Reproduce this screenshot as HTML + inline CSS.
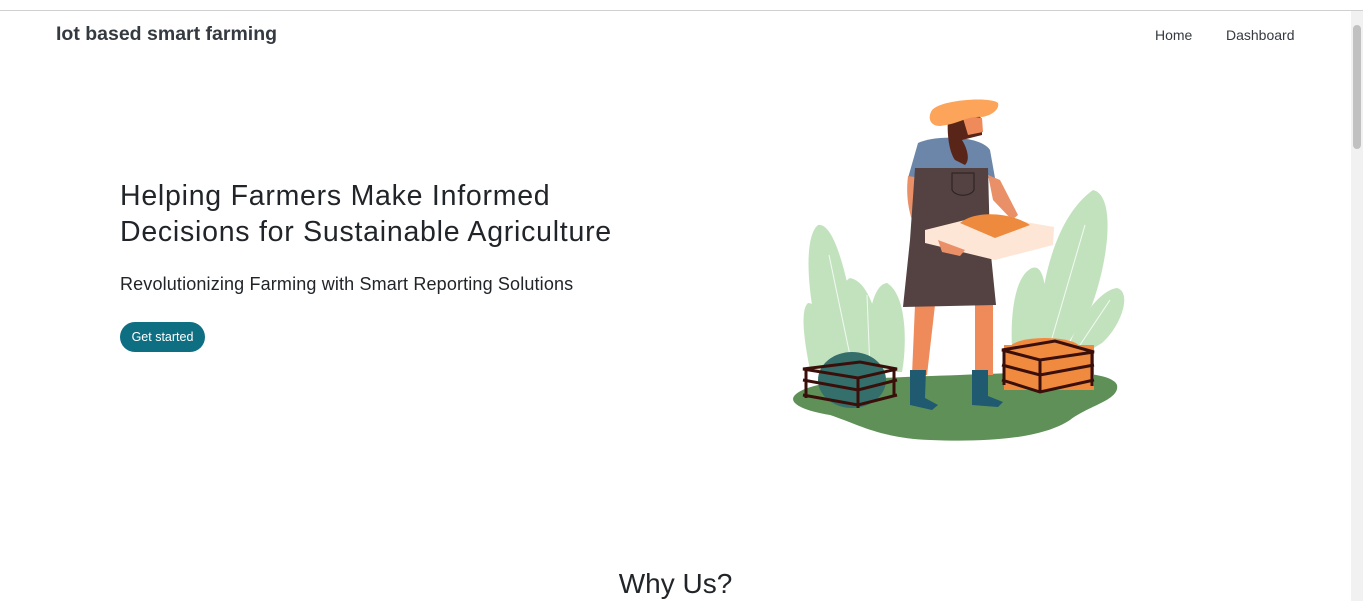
<!DOCTYPE html>
<html><head><meta charset="utf-8"><style>
html,body{margin:0;padding:0;width:1363px;height:601px;overflow:hidden;background:#fff;font-family:"Liberation Sans",sans-serif;color:#212529}
.topline{position:absolute;left:0;top:10px;width:1363px;height:1px;background:#d0d0d0}
.sb{position:absolute;right:0;top:11px;width:12px;height:590px;background:#f1f1f1}
.sb div{position:absolute;left:2px;top:14px;width:8px;height:124px;background:#c1c1c1;border-radius:4px}
.brand{position:absolute;left:56px;top:23px;font-size:19.5px;font-weight:bold;color:#343a40}
.nav{position:absolute;top:27px;font-size:14px;color:#343a40}
h1{position:absolute;left:120px;top:178px;margin:0;font-weight:normal;font-size:28.5px;line-height:36px;color:#212529;letter-spacing:0.75px}
.sub{position:absolute;left:120px;top:274px;font-size:18px;color:#212529;letter-spacing:0.15px}
.btn{position:absolute;left:120px;top:322px;width:85px;height:30px;border-radius:15px;background:#0e6f83;color:#fff;font-size:12.5px;text-align:center;line-height:30px}
.why{position:absolute;left:0;width:1351px;top:568px;text-align:center;font-size:28px}
</style></head><body>
<div class="topline"></div>
<div class="sb"><div></div></div>
<div class="brand">Iot based smart farming</div>
<div class="nav" style="left:1155px">Home</div>
<div class="nav" style="left:1226px">Dashboard</div>
<h1>Helping Farmers Make Informed<br>Decisions for Sustainable Agriculture</h1>
<div class="sub">Revolutionizing Farming with Smart Reporting Solutions</div>
<div class="btn">Get started</div>
<div class="why">Why Us?</div>
<svg style="position:absolute;left:0;top:0" width="1363" height="601">
<g fill="#c2e2be">
<path d="M818 225 C835 222 850 280 862 368 L828 370 C810 320 800 240 818 225Z"/>
<path d="M850 278 C872 282 882 330 884 372 L845 372 C836 330 836 285 850 278Z"/>
<path d="M887 283 C907 295 907 345 902 372 L866 372 C866 330 870 285 887 283Z"/>
<path d="M1093 190 C1115 195 1110 255 1092 305 L1065 348 L1038 345 C1040 275 1058 215 1093 190Z"/>
<path d="M1032 268 C1048 262 1048 310 1043 348 L1012 348 C1010 310 1016 275 1032 268Z"/>
<path d="M1117 288 C1132 292 1122 325 1102 343 L1082 355 L1068 348 C1078 320 1100 290 1117 288Z"/>
<path d="M808 303 C822 303 830 340 832 370 L810 370 C804 340 800 310 808 303Z"/>
</g>
<g stroke="#fff" stroke-width="1" fill="none" opacity="0.8">
<path d="M829 255 L852 365"/><path d="M1085 225 L1050 345"/><path d="M867 295 L870 370"/><path d="M1110 300 L1080 345"/>
</g>
<path d="M795 395 C810 380 870 378 960 375 C1040 372 1110 368 1117 385 C1120 400 1090 405 1070 420 C1040 440 980 442 930 440 C880 438 860 425 830 415 C800 410 788 402 795 395Z" fill="#5f9057"/>
<ellipse cx="852" cy="380" rx="34" ry="28" fill="#356f6b"/>
<g stroke="#3a0f0a" stroke-width="3" fill="none">
<path d="M803 369 L860 362 L897 369 L858 378Z"/><path d="M803 380 L858 390 L897 380"/><path d="M803 395 L858 405 L897 395"/>
<path d="M806 369 V398 M858 378 V408 M894 369 V397"/>
</g>
<rect x="1004" y="345" width="90" height="45" fill="#f08a3e"/>
<ellipse cx="1045" cy="348" rx="35" ry="10" fill="#f08a3e"/>
<g stroke="#3a0f0a" stroke-width="3" fill="none">
<path d="M1002 350 L1055 341 L1094 352 L1040 360Z"/><path d="M1002 365 L1040 375 L1094 365"/><path d="M1002 380 L1040 392 L1094 380"/>
<path d="M1004 350 V385 M1040 360 V393 M1092 352 V386"/>
</g>
<path d="M915 305 L935 305 L927 375 L912 375Z" fill="#ef8a5a"/>
<path d="M975 305 L993 305 L993 375 L975 375Z" fill="#ef8a5a"/>
<path d="M910 370 L926 370 L925 398 L938 405 L932 410 L910 405Z" fill="#205a70"/>
<path d="M972 370 L988 370 L988 396 L1003 402 L998 407 L972 405Z" fill="#205a70"/>
<path d="M918 143 C935 135 980 135 990 150 L995 178 L908 178 Z" fill="#6b86a8"/>
<path d="M908 176 C905 200 910 225 925 245 L945 255 L950 246 L932 235 C925 220 922 200 921 178Z" fill="#ea9068"/>
<path d="M915 168 L988 168 L990 245 L996 305 L903 307 L910 240Z" fill="#544242"/>
<path d="M952 173 L974 173 L974 190 C970 197 956 197 952 190Z" fill="none" stroke="#2a1f1f" stroke-width="1"/>
<path d="M988 175 L1000 180 L1018 215 L1012 220 L993 200Z" fill="#ea9068"/>
<path d="M925 230 L985 215 L1054 227 L1053 245 L995 260 L925 243Z" fill="#fde6d6"/>
<path d="M960 223 C975 210 1010 212 1030 225 L995 238 Z" fill="#ee8a3d"/>
<path d="M938 240 L965 250 L960 256 L942 252Z" fill="#ea9068"/>
<path d="M948 118 C950 108 978 108 982 120 L982 135 L962 140 C968 150 970 160 965 165 L955 160 C948 150 947 130 948 118Z" fill="#5a2519"/>
<path d="M962 115 L982 118 L983 132 L968 135Z" fill="#ef8a5a"/>
<path d="M931 112 C935 100 990 96 998 103 C1000 110 990 116 982 117 C965 116 960 124 940 126 C930 126 928 118 931 112Z" fill="#fca459"/>
</svg>
</body></html>
